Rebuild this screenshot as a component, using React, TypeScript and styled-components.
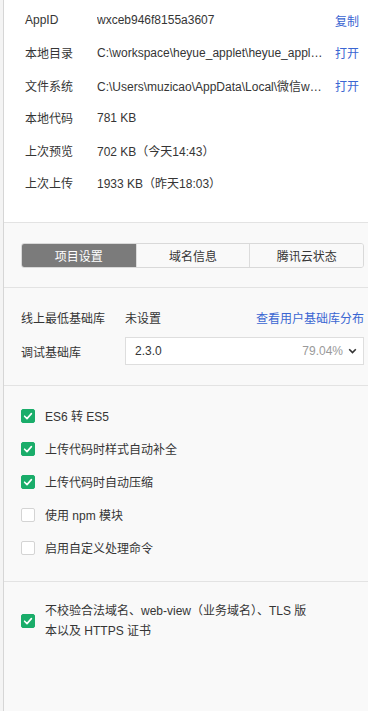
import React from "react";
import styled, { createGlobalStyle } from "styled-components";

const Global = createGlobalStyle`
  html, body { margin: 0; padding: 0; background: #f9f9f9; }
  body {
    font-family: "Liberation Sans", "Noto Sans CJK SC", sans-serif;
    font-size: 12px;
    color: #353535;
  }
  * { box-sizing: border-box; }
`;

const Page = styled.div`
  display: flex;
  width: 368px;
  height: 711px;
  overflow: hidden;
`;

const LeftStrip = styled.div`
  width: 4px;
  flex: none;
  background: #f4f4f4;
  border-right: 1px solid #d6d6d6;
`;

const Main = styled.div`
  flex: 1;
  min-width: 0;
  display: flex;
  flex-direction: column;
  background: #f9f9f9;
`;

const InfoSection = styled.section`
  background: #ffffff;
  padding: 4px 9px 23px 21px;
  border-bottom: 1px solid #e3e3e3;
  display: grid;
  grid-template-columns: 60px minmax(0, 1fr) 24px;
  grid-auto-rows: 32.5px;
  column-gap: 12px;
  align-items: center;
`;

const Label = styled.span`
  white-space: nowrap;
  color: #353535;
`;

const Value = styled.span`
  white-space: nowrap;
  overflow: hidden;
  text-overflow: ellipsis;
  color: #353535;
`;

const Link = styled.a`
  color: #3a66d2;
  text-decoration: none;
  white-space: nowrap;
  cursor: pointer;
`;

const TabSection = styled.section`
  padding: 20px 4px 19px 17px;
  border-bottom: 1px solid #e3e3e3;
`;

const Tabs = styled.div`
  display: grid;
  grid-template-columns: repeat(3, 1fr);
  height: 25px;
  border: 1px solid #d9d9d9;
  border-radius: 3px;
  overflow: hidden;
`;

const Tab = styled.div<{ $active?: boolean }>`
  display: flex;
  align-items: center;
  justify-content: center;
  background: ${(p) => (p.$active ? "#7b7b7b" : "#f9f9f9")};
  color: ${(p) => (p.$active ? "#ffffff" : "#353535")};
  & + & {
    border-left: 1px solid #dcdcdc;
  }
`;

const LibSection = styled.section`
  padding: 15px 4px 20px 17px;
  border-bottom: 1px solid #e3e3e3;
  display: grid;
  grid-template-columns: 104px 1fr auto;
  grid-auto-rows: 28px;
  row-gap: 6px;
  align-items: center;
`;

const Select = styled.div`
  grid-column: 2 / 4;
  height: 28px;
  background: #ffffff;
  border: 1px solid #dedede;
  display: flex;
  align-items: center;
  padding: 0 6px 0 9px;
  gap: 5px;
`;

const SelectValue = styled.span`
  flex: 1;
  color: #353535;
`;

const Percent = styled.span`
  color: #9a9a9a;
`;

const OptionsSection = styled.section`
  padding: 13px 4px 17px 17px;
  border-bottom: 1px solid #e3e3e3;
  display: flex;
  flex-direction: column;
`;

const Option = styled.label`
  display: flex;
  align-items: center;
  gap: 10px;
  height: 33px;
`;

const Box = styled.span<{ $checked?: boolean }>`
  flex: none;
  width: 14px;
  height: 14px;
  border-radius: 2px;
  display: flex;
  align-items: center;
  justify-content: center;
  background: ${(p) => (p.$checked ? "#1aad6a" : "#ffffff")};
  border: 1px solid ${(p) => (p.$checked ? "#1aad6a" : "#d4d4d4")};
`;

const DomainSection = styled.section`
  padding: 19px 28px 0 17px;
`;

const DomainOption = styled.label`
  display: flex;
  align-items: center;
  gap: 10px;
`;

const DomainText = styled.span`
  line-height: 20px;
  flex: 0 1 auto;
  width: 265px;
`;

const Check = () => (
  <svg width="10" height="10" viewBox="0 0 10 10">
    <polyline
      points="1.6,5.2 4,7.6 8.4,2.6"
      fill="none"
      stroke="#fff"
      strokeWidth="1.6"
      strokeLinecap="round"
      strokeLinejoin="round"
    />
  </svg>
);

const Checkbox = ({ checked }: { checked?: boolean }) => (
  <Box $checked={checked}>{checked && <Check />}</Box>
);

const Chevron = () => (
  <svg width="9" height="6" viewBox="0 0 9 6">
    <polyline
      points="1.2,1.2 4.5,4.5 7.8,1.2"
      fill="none"
      stroke="#333"
      strokeWidth="1.6"
    />
  </svg>
);

const info = [
  { label: "AppID", value: "wxceb946f8155a3607", action: "复制" },
  {
    label: "本地目录",
    value: "C:\\workspace\\heyue_applet\\heyue_applet\\heyue_applet",
    action: "打开",
  },
  {
    label: "文件系统",
    value: "C:\\Users\\muzicao\\AppData\\Local\\微信web开发者工具\\User Data",
    action: "打开",
  },
  { label: "本地代码", value: "781 KB" },
  { label: "上次预览", value: "702 KB（今天14:43）" },
  { label: "上次上传", value: "1933 KB（昨天18:03）" },
];

const options = [
  { text: "ES6 转 ES5", checked: true },
  { text: "上传代码时样式自动补全", checked: true },
  { text: "上传代码时自动压缩", checked: true },
  { text: "使用 npm 模块", checked: false },
  { text: "启用自定义处理命令", checked: false },
];

export default function App() {
  return (
    <>
      <Global />
      <Page>
        <LeftStrip />
        <Main>
          <InfoSection>
            {info.map((r) => (
              <React.Fragment key={r.label}>
                <Label>{r.label}</Label>
                <Value>{r.value}</Value>
                {r.action ? <Link>{r.action}</Link> : <span />}
              </React.Fragment>
            ))}
          </InfoSection>
          <TabSection>
            <Tabs>
              <Tab $active>项目设置</Tab>
              <Tab>域名信息</Tab>
              <Tab>腾讯云状态</Tab>
            </Tabs>
          </TabSection>
          <LibSection>
            <Label>线上最低基础库</Label>
            <Value>未设置</Value>
            <Link>查看用户基础库分布</Link>
            <Label>调试基础库</Label>
            <Select>
              <SelectValue>2.3.0</SelectValue>
              <Percent>79.04%</Percent>
              <Chevron />
            </Select>
          </LibSection>
          <OptionsSection>
            {options.map((o) => (
              <Option key={o.text}>
                <Checkbox checked={o.checked} />
                <span>{o.text}</span>
              </Option>
            ))}
          </OptionsSection>
          <DomainSection>
            <DomainOption>
              <Checkbox checked />
              <DomainText>
                不校验合法域名、web-view（业务域名）、TLS 版本以及 HTTPS 证书
              </DomainText>
            </DomainOption>
          </DomainSection>
        </Main>
      </Page>
    </>
  );
}
